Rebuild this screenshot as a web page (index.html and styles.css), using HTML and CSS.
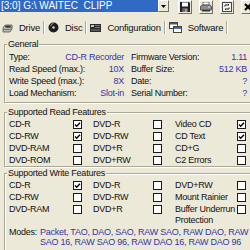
FILE: index.html
```html
<!DOCTYPE html>
<html lang="en">
<head>
    <meta charset="UTF-8">
    <title>Drive Info</title>
    <link rel="stylesheet" href="styles.css">
</head>
<body>
    <div class="window">
        <div class="toolbar">
            <div class="combo">
                <div class="combo-text">[3:0] G:\ WAITEC&nbsp; CLIPP</div>
                <div class="combo-btn">
                    <svg width="5" height="3" viewBox="0 0 5 3"><path d="M0 0h5L2.5 3z" fill="#000"/></svg>
                </div>
            </div>
            <div class="tool-btn">
                <svg width="10" height="10" viewBox="0 0 10 10">
                    <path d="M0 0h9l1 1v9H0z" fill="#222"/>
                    <rect x="2" y="0.5" width="6" height="4" fill="#fff"/>
                    <rect x="2.5" y="6.5" width="5" height="3.5" fill="#a0a0a0"/>
                    <rect x="3.5" y="7" width="1" height="2.5" fill="#222"/>
                </svg>
            </div>
            <div class="tool-btn">
                <svg width="12" height="10" viewBox="0 0 12 10">
                    <path d="M3 0h6v3H3z" fill="#fff" stroke="#555" stroke-width="0.8"/>
                    <path d="M0.5 4.5L2 3h8l1.5 1.5V8H0.5z" fill="#8c8c8c" stroke="#444" stroke-width="0.8"/>
                    <rect x="2" y="8" width="8" height="1.5" fill="#333"/>
                    <rect x="8" y="4.5" width="2" height="1" fill="#ddd"/>
                </svg>
            </div>
            <div class="tool-btn">
                <svg width="10" height="10" viewBox="0 0 10 10">
                    <rect x="0.5" y="0.5" width="9" height="9" fill="#f4f3ee" stroke="#444"/>
                    <path d="M3 4.5V3h4l-1-1M7 5.5V7H3l1 1" fill="none" stroke="#222" stroke-width="1"/>
                </svg>
            </div>
            <div class="tool-btn">
                <svg width="10" height="10" viewBox="0 0 10 10"><path d="M2 2l6 6M8 2l-6 6" stroke="#000" stroke-width="2"/></svg>
            </div>
        </div>

        <div class="tabs">
            <div class="tab">
                <svg width="11" height="10" viewBox="0 0 11 10">
                    <path d="M1 5l2-3h7v4l-2 3H1z" fill="#b8b8b0" stroke="#555" stroke-width="0.8"/>
                    <ellipse cx="6" cy="3.6" rx="3" ry="1.2" fill="#333"/>
                    <path d="M1 6.5h7l2-3" fill="none" stroke="#666" stroke-width="0.8"/>
                </svg>
                Drive
            </div>
            <div class="tab">
                <svg width="11" height="11" viewBox="0 0 11 11">
                    <circle cx="5.5" cy="5.5" r="5" fill="#1e1e1e"/>
                    <path d="M2.5 4a3.5 3.5 0 0 1 3-2.5" stroke="#9a9a9a" fill="none"/>
                    <circle cx="5.5" cy="5.5" r="1.2" fill="#d8d8d8"/>
                </svg>
                Disc
            </div>
            <div class="tab">
                <svg width="11" height="10" viewBox="0 0 11 10">
                    <rect x="0" y="1" width="11" height="8" fill="#2b2b2b"/>
                    <rect x="1" y="2" width="3" height="2" fill="#c8c8c8"/>
                    <rect x="5" y="2" width="5" height="1" fill="#777"/>
                    <rect x="5" y="4" width="5" height="1" fill="#777"/>
                    <rect x="1" y="6" width="9" height="2" fill="#555"/>
                </svg>
                Configuration
            </div>
            <div class="tab">
                <svg width="13" height="11" viewBox="0 0 13 11">
                    <rect x="0.5" y="0.5" width="8" height="6" fill="#fff" stroke="#444"/>
                    <rect x="1" y="1" width="7" height="1.5" fill="#555"/>
                    <rect x="4.5" y="4.5" width="8" height="6" fill="#fff" stroke="#444"/>
                    <rect x="5" y="5" width="7" height="1.8" fill="#2a5cc8"/>
                </svg>
                Software
            </div>
        </div>

        <fieldset class="group general">
            <legend>General</legend>
            <div class="info">
                <div class="info-col">
                    <div class="info-row"><span>Type:</span><span class="value">CD-R Recorder</span></div>
                    <div class="info-row"><span>Read Speed (max.):</span><span class="value">10X</span></div>
                    <div class="info-row"><span>Write Speed (max.):</span><span class="value">8X</span></div>
                    <div class="info-row"><span>Load Mechanism:</span><span class="value">Slot-in</span></div>
                </div>
                <div class="info-col">
                    <div class="info-row"><span>Firmware Version:</span><span class="value">1.11</span></div>
                    <div class="info-row"><span>Buffer Size:</span><span class="value">512 KB</span></div>
                    <div class="info-row"><span>Date:</span><span class="value">?</span></div>
                    <div class="info-row"><span>Serial Number:</span><span class="value">?</span></div>
                </div>
            </div>
        </fieldset>

        <fieldset class="group read">
            <legend>Supported Read Features</legend>
            <div class="features">
                <span class="feat">CD-R</span><span class="cb checked"></span><span></span>
                <span class="feat">DVD-R</span><span class="cb"></span><span></span>
                <span class="feat">Video CD</span><span class="cb checked"></span>

                <span class="feat">CD-RW</span><span class="cb checked"></span><span></span>
                <span class="feat">DVD-RW</span><span class="cb"></span><span></span>
                <span class="feat">CD Text</span><span class="cb checked"></span>

                <span class="feat">DVD-RAM</span><span class="cb"></span><span></span>
                <span class="feat">DVD+R</span><span class="cb"></span><span></span>
                <span class="feat">CD+G</span><span class="cb"></span>

                <span class="feat">DVD-ROM</span><span class="cb"></span><span></span>
                <span class="feat">DVD+RW</span><span class="cb"></span><span></span>
                <span class="feat">C2 Errors</span><span class="cb"></span>
            </div>
        </fieldset>

        <fieldset class="group write">
            <legend>Supported Write Features</legend>
            <div class="features">
                <span class="feat">CD-R</span><span class="cb checked"></span><span></span>
                <span class="feat">DVD-R</span><span class="cb"></span><span></span>
                <span class="feat">DVD+RW</span><span class="cb"></span>

                <span class="feat">CD-RW</span><span class="cb"></span><span></span>
                <span class="feat">DVD-RW</span><span class="cb"></span><span></span>
                <span class="feat">Mount Rainier</span><span class="cb"></span>

                <span class="feat">DVD-RAM</span><span class="cb"></span><span></span>
                <span class="feat">DVD+R</span><span class="cb"></span><span></span>
                <span class="feat">Buffer Underrun Protection</span><span class="cb"></span>
            </div>
            <div class="modes">
                <span>Modes:</span>
                <span class="value modes-list">Packet, TAO, DAO, SAO, RAW SAO, RAW DAO, RAW SAO 16, RAW SAO 96, RAW DAO 16, RAW DAO 96</span>
            </div>
        </fieldset>
    </div>
</body>
</html>
```

FILE: styles.css
```css
body {
    margin: 0;
    width: 250px;
    height: 250px;
    overflow: hidden;
    background: #ece9d8;
    font-family: "Liberation Sans", Arial, sans-serif;
    font-size: 9px;
    letter-spacing: -0.25px;
    color: #111;
}
.window {
    width: 262px;
}
.toolbar {
    display: flex;
    align-items: flex-start;
    height: 15px;
}
.combo {
    display: flex;
    width: 169px;
}
.combo-text {
    width: 158px;
    height: 12px;
    line-height: 12px;
    padding-left: 1px;
    box-sizing: border-box;
    background: #316ac5;
    color: #fff;
    font-size: 10px;
    letter-spacing: 0;
    white-space: nowrap;
}
.combo-btn {
    width: 11px;
    height: 12px;
    box-sizing: border-box;
    border: 1px solid;
    border-color: #fff #716f64 #716f64 #fff;
    display: flex;
    align-items: center;
    justify-content: center;
}
.tool-btn {
    width: 14px;
    height: 14px;
    box-sizing: border-box;
    margin-left: 7px;
    border: 1px solid;
    border-color: #fff #716f64 #716f64 #fff;
    display: flex;
    align-items: center;
    justify-content: center;
}
.combo + .tool-btn {
    margin-left: 9px;
}
.tabs {
    display: flex;
    align-items: center;
    height: 17px;
    margin-top: 4px;
}
.tab {
    display: flex;
    align-items: center;
    gap: 6px;
    height: 13px;
    padding: 0 3px 0 2px;
    border-right: 1px solid #aca899;
    box-shadow: 1px 0 0 #fff;
    margin-right: 2px;
    font-size: 9.5px;
}
.group {
    margin: 3px 0 0 4px;
    padding: 1px 0 0 4px;
    border: 1px solid #aca899;
    box-shadow: inset 1px 1px 0 #fff, 1px 1px 0 #fff;
    min-width: 0;
}
.group legend {
    margin-left: -2px;
    padding: 0 1px;
    line-height: 10px;
    background: #ece9d8;
}
.general {
    padding-top: 2px;
    padding-bottom: 3px;
}
.read {
    margin-top: 4px;
}
.write {
    margin-top: 1px;
    padding-bottom: 20px;
}
.info {
    display: grid;
    grid-template-columns: 115px 116px;
    column-gap: 7px;
}
.info-row {
    display: flex;
    justify-content: space-between;
    height: 12px;
    line-height: 12px;
}
.value {
    color: #3535a8;
}
.features {
    display: grid;
    grid-template-columns: 64px 9px 11px 60px 9px 13px 62px 9px;
    grid-auto-rows: minmax(12px, auto);
}
.feat {
    line-height: 11px;
    padding-top: 1px;
}
.cb {
    width: 9px;
    height: 9px;
    box-sizing: border-box;
    margin-top: 2px;
    border: 1px solid #1a1a1a;
    background: #fff;
}
.cb.checked {
    background: #fff url("data:image/svg+xml,%3Csvg xmlns='http://www.w3.org/2000/svg' width='7' height='7'%3E%3Cpath d='M1 3.5l1.7 1.7L6 1.8' fill='none' stroke='%23000' stroke-width='1.4'/%3E%3C/svg%3E") no-repeat center;
}
.modes {
    display: flex;
    gap: 3px;
    margin-top: 1px;
    line-height: 10px;
}
.modes-list {
    width: 216px;
}
```
